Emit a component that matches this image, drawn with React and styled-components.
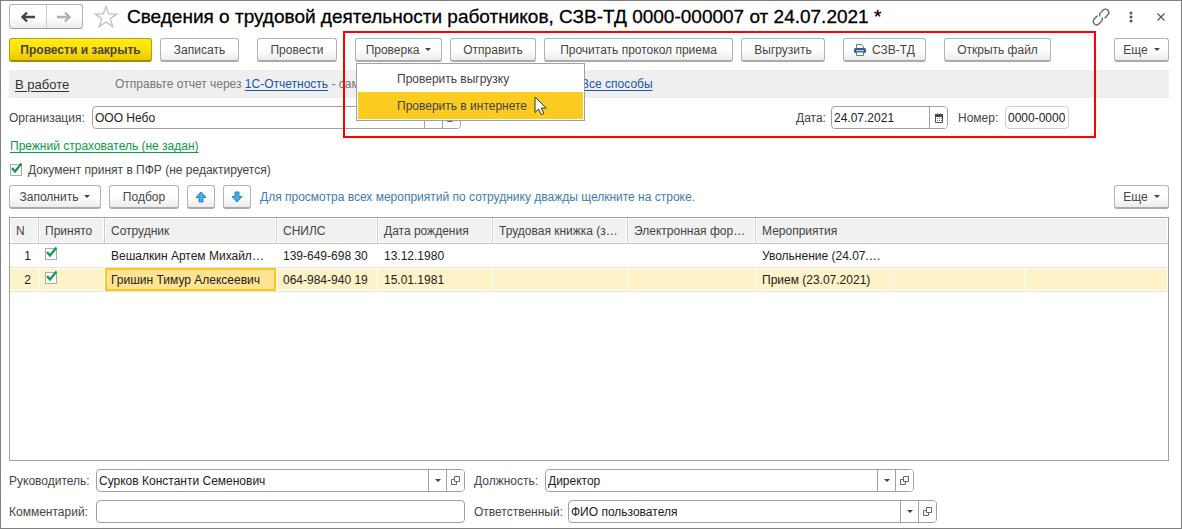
import React, { useState } from "react";
import styled, { createGlobalStyle } from "styled-components";

const GlobalStyle = createGlobalStyle`
  * {
    box-sizing: border-box;
  }
  body {
    margin: 0;
    background: #fff;
  }
  body, button, input, table {
    font-family: "Liberation Sans", Arial, sans-serif;
    font-size: 12px;
    color: #444;
  }
`;

const Window = styled.main`
  position: relative;
  display: flex;
  flex-direction: column;
  min-height: 100vh;
  padding: 3px 12px 5px 8px;
  border: 1px solid #808080;
  background: #fff;
`;

const TitleBar = styled.header`
  display: flex;
  align-items: center;
  height: 25px;
  margin-right: -7px;
`;

const NavGroup = styled.div`
  display: flex;
  width: 74px;
  height: 25px;
  border: 1px solid #b3b3b3;
  border-bottom-color: #999;
  border-radius: 3px;
  background: linear-gradient(#fff 50%, #ececec);
`;

const NavButton = styled.button`
  display: flex;
  flex: 1;
  align-items: center;
  justify-content: center;
  padding: 0;
  border: none;
  background: none;

  & + & {
    border-left: 1px solid #ccc;
  }
`;

const IconButton = styled.button`
  display: flex;
  align-items: center;
  justify-content: center;
  width: 30px;
  height: 24px;
  padding: 0;
  border: none;
  background: none;
`;

const StarButton = styled(IconButton)`
  width: 24px;
  margin: 0 9px 0 11px;
`;

const Title = styled.h1`
  flex: 1;
  margin: 0;
  font-size: 19px;
  font-weight: 400;
  line-height: 24px;
  color: #000;
  white-space: nowrap;
  -webkit-text-stroke: 0.3px #000;
`;

const Toolbar = styled.div`
  display: flex;
  gap: 8px;
  margin-top: ${({ $top }) => $top}px;
`;

const ToolGroup = styled.div`
  display: flex;
  gap: 8px;
  margin-right: ${({ $push }) => ($push ? "auto" : "10px")};
`;

const Button = styled.button`
  display: flex;
  align-items: center;
  justify-content: center;
  gap: 6px;
  width: ${({ $w }) => $w}px;
  height: 24px;
  padding: 0;
  border: 1px solid #b3b3b3;
  border-bottom: 2px solid #aaa;
  border-radius: 3px;
  background: linear-gradient(#fff 50%, #ececec);
  white-space: nowrap;
`;

const PrimaryButton = styled(Button)`
  border-color: #b8a000;
  border-bottom-color: #a08c00;
  background: linear-gradient(#ffec1a, #ffe000 50%, #e8c800);
  font-weight: 700;
`;

const Caret = styled.span`
  border: 3px solid transparent;
  border-top-color: #444;
  border-bottom: none;
`;

const MenuAnchor = styled.div`
  position: relative;
`;

const Menu = styled.ul`
  position: absolute;
  top: 25px;
  left: 1px;
  z-index: 3;
  width: 229px;
  margin: 0;
  padding: 1px;
  border: 1px solid #a0a0a0;
  background: #fff;
  list-style: none;
`;

const MenuItem = styled.button`
  display: block;
  width: 100%;
  height: 27px;
  padding: 0 0 0 39px;
  border: none;
  background: ${({ $active }) => ($active ? "#fbcb20" : "#fff")};
  text-align: left;
`;

const Pointer = styled.svg`
  position: absolute;
  top: 58px;
  left: 179px;
  z-index: 4;
`;

const Banner = styled.div`
  display: flex;
  align-items: center;
  height: 28px;
  margin-top: 8px;
  padding-left: 6px;
  background: #efefef;
  color: #777;
  white-space: nowrap;
`;

const Link = styled.a`
  color: ${({ $color }) => $color || "#1655b0"};
  font-size: ${({ $large }) => ($large ? 13 : 12)}px;
  text-decoration: underline;
  text-underline-offset: 2px;
`;

const StateCell = styled.div`
  width: 100px;
`;

const Note = styled.span`
  width: 253px;
  overflow: hidden;
  white-space: pre;
`;

const FieldRow = styled.div`
  display: flex;
  align-items: center;
  gap: 10px;
  margin-top: 8px;
`;

const FieldGroup = styled.div`
  display: flex;
  gap: 10px;
  margin-left: auto;
  padding-right: 100px;
`;

const Field = styled.div`
  display: flex;
  align-items: center;
  flex: 0 1 auto;
`;

const Label = styled.label`
  width: ${({ $w }) => $w}px;
  flex-shrink: 0;
  white-space: nowrap;
`;

const InputBox = styled.div`
  display: flex;
  width: ${({ $w }) => $w}px;
  height: 23px;
  padding-right: ${({ $pale }) => ($pale ? 3 : 0)}px;
  border: 1px solid ${({ $pale }) => ($pale ? "#d0d0d0" : "#a0a0a0")};
  border-radius: 4px;
  background: #fff;
  overflow: hidden;
`;

const Input = styled.input`
  flex: 1;
  min-width: 0;
  padding: 0 0 0 2px;
  border: none;
  outline: none;
  background: none;
  color: #222;
`;

const InputButton = styled.button`
  display: flex;
  align-items: center;
  justify-content: center;
  width: 18px;
  padding: 0;
  border: none;
  border-left: 1px solid #a0a0a0;
  background: #fff;
`;

const LinkRow = styled.div`
  margin-top: 8px;
  padding-left: 1px;
  line-height: 18px;
`;

const CheckRow = styled.label`
  display: flex;
  align-items: center;
  gap: 6px;
  height: 18px;
  margin-top: 6px;
  padding-left: 1px;
`;

const CheckWrap = styled.span`
  position: relative;
  display: inline-block;
  width: 12px;
  height: 12px;

  input {
    display: block;
    width: 12px;
    height: 12px;
    margin: 0;
    border: 1px solid #aaa;
    background: #fff;
    appearance: none;
  }

  svg {
    position: absolute;
    top: -2px;
    left: 0;
    pointer-events: none;
  }
`;

const Hint = styled.span`
  align-self: center;
  margin-right: auto;
  padding-left: 1px;
  color: #3b7db3;
  white-space: nowrap;
`;

const TablePanel = styled.section`
  flex: 1;
  margin-top: 8px;
  border: 1px solid #a0a0a0;
  overflow: hidden;
`;

const Table = styled.table`
  width: 100%;
  border-collapse: separate;
  border-spacing: 0;
  table-layout: fixed;
`;

const Th = styled.th`
  height: 26px;
  padding: 0 7px 0 6px;
  border-right: 1px solid #ccc;
  border-bottom: 1px solid #c4c4c4;
  background: #f1f1f1;
  box-shadow: inset 0 0 0 1px #fff;
  font-weight: 400;
  text-align: left;
  white-space: nowrap;
  overflow: hidden;
  text-overflow: ellipsis;

  &:last-child {
    border-right: none;
  }
`;

const Td = styled.td`
  height: 24px;
  padding: 0 7px 0 6px;
  border-right: 1px solid #fff;
  border-bottom: 1px solid #e2e2e2;
  background: ${({ $selected }) => ($selected ? "#fdf2c8" : "#fff")};
  box-shadow: ${({ $current }) =>
    $current ? "inset 0 0 0 2px #fbc81e" : "inset 0 -1px #fff, inset 0 1px #fff"};
  color: #222;
  text-align: ${({ $right }) => ($right ? "right" : "left")};
  white-space: nowrap;
  overflow: hidden;
  text-overflow: ellipsis;
  ${({ $current }) => $current && "background: #fee491;"}
`;

const Footer = styled.footer`
  display: grid;
  gap: 8px;
  margin-top: 8px;
`;

const FooterRow = styled.div`
  display: flex;
  gap: 9px;
`;

const Highlight = styled.div`
  position: absolute;
  top: 30px;
  left: 342px;
  z-index: 2;
  width: 753px;
  height: 107px;
  border: 2px solid #f00;
  pointer-events: none;
`;

const columns = [
  { title: "N", width: 29 },
  { title: "Принято", width: 66 },
  { title: "Сотрудник", width: 172 },
  { title: "СНИЛС", width: 101 },
  { title: "Дата рождения", width: 115 },
  { title: "Трудовая книжка (заявление)", width: 135 },
  { title: "Электронная форма (заявление)", width: 128 },
  { title: "Мероприятия", width: 135, span: 3 },
];

const employees = [
  {
    name: "Вешалкин Артем Михайлович",
    snils: "139-649-698 30",
    birth: "13.12.1980",
    event: "Увольнение (24.07.2021)",
  },
  {
    name: "Гришин Тимур Алексеевич",
    snils: "064-984-940 19",
    birth: "15.01.1981",
    event: "Прием (23.07.2021)",
  },
];

function ArrowIcon({ color, flip }) {
  return (
    <svg width="16" height="12" viewBox="0 0 16 12">
      <path
        d="M7 1.5 2.5 6 7 10.5M3 6h12"
        fill="none"
        stroke={color}
        strokeWidth="2.4"
        transform={flip ? "rotate(180 8 6)" : undefined}
      />
    </svg>
  );
}

function MoveIcon({ down }) {
  return (
    <svg width="12" height="12" viewBox="0 0 12 12">
      <path
        d="M6 1 11 6.4H8V11H4V6.4H1Z"
        fill="#3fb0ee"
        stroke="#2a82bd"
        strokeWidth="1"
        strokeLinejoin="round"
        transform={down ? "rotate(180 6 6)" : undefined}
      />
    </svg>
  );
}

function PrinterIcon() {
  return (
    <svg width="12" height="12" viewBox="0 0 12 12">
      <path d="M2.5 4.5v-4h5l2 2v2" fill="#fff" stroke="#5c7f9f" />
      <rect y="4" width="12" height="5" rx="1.5" fill="#2f5f8c" />
      <path d="M2 6.5h8" stroke="#b8cadb" />
      <path d="M2.5 8h7v3.5h-7z" fill="#fff" stroke="#5c7f9f" />
    </svg>
  );
}

function CalendarIcon() {
  return (
    <svg width="10" height="10" viewBox="0 0 10 10">
      <path d="M1.5 2h7v7.5h-7z" fill="#fff" stroke="#555" />
      <path d="M1 1h8v3H1z" fill="#444" />
      <path d="M3.5 0v2M6.5 0v2" stroke="#888" />
      <path d="M3 5.5h5M3 7.5h5" stroke="#777" strokeDasharray="1 1" />
    </svg>
  );
}

function OpenIcon() {
  return (
    <svg width="10" height="10" viewBox="0 0 10 10">
      <path d="M3.5.5h5v5h-5zM3 3.5H.5v5h5V6" fill="none" stroke="#666" />
    </svg>
  );
}

function Check(props) {
  const [checked, setChecked] = useState(true);

  return (
    <CheckWrap>
      <input
        type="checkbox"
        checked={checked}
        onChange={() => setChecked(!checked)}
        {...props}
      />
      {checked && (
        <svg width="13" height="12" viewBox="0 0 13 12">
          <path
            d="M2 6 5 9.5 11.5 1.5"
            fill="none"
            stroke="#0c9a48"
            strokeWidth="2.2"
          />
        </svg>
      )}
    </CheckWrap>
  );
}

function TextField({ id, label, labelWidth, width, value, select, pale, date }) {
  return (
    <Field>
      <Label htmlFor={id} $w={labelWidth}>
        {label}
      </Label>
      <InputBox $w={width} $pale={pale}>
        <Input id={id} defaultValue={value} />
        {select && (
          <>
            <InputButton aria-label="Выбрать">
              <Caret />
            </InputButton>
            <InputButton aria-label="Открыть">
              <OpenIcon />
            </InputButton>
          </>
        )}
        {date && (
          <InputButton aria-label="Календарь">
            <CalendarIcon />
          </InputButton>
        )}
      </InputBox>
    </Field>
  );
}

function App() {
  return (
    <Window>
      <GlobalStyle />
      <TitleBar>
        <NavGroup>
          <NavButton aria-label="Назад">
            <ArrowIcon color="#444" />
          </NavButton>
          <NavButton aria-label="Вперед">
            <ArrowIcon color="#b0b0b0" flip />
          </NavButton>
        </NavGroup>
        <StarButton aria-label="В избранное">
          <svg width="24" height="24" viewBox="0 0 24 24">
            <path
              d="M12 1.5 14.7 9H22.5L16.2 13.7 18.8 21.8 12 17 5.2 21.8 7.8 13.7 1.5 9H9.3Z"
              fill="none"
              stroke="#b4bcc4"
              strokeWidth="1.2"
            />
          </svg>
        </StarButton>
        <Title>
          Сведения о трудовой деятельности работников, СЗВ-ТД 0000-000007 от
          24.07.2021 *
        </Title>
        <IconButton aria-label="Ссылка">
          <svg width="18" height="18" viewBox="0 0 16 16">
            <g
              fill="none"
              stroke="#666"
              strokeWidth="1.2"
              transform="rotate(-45 8 8)"
            >
              <path d="M6.5 5H2.5a3 3 0 0 0 0 6h3a3 3 0 0 0 2.8-2" />
              <path d="M9.5 11h4a3 3 0 0 0 0-6h-3a3 3 0 0 0-2.8 2" />
            </g>
          </svg>
        </IconButton>
        <IconButton aria-label="Меню">
          <svg width="4" height="12" viewBox="0 0 4 12">
            <g fill="#555">
              <circle cx="2" cy="2" r="1.5" />
              <circle cx="2" cy="6" r="1.5" />
              <circle cx="2" cy="10" r="1.5" />
            </g>
          </svg>
        </IconButton>
        <IconButton aria-label="Закрыть">
          <svg width="8" height="8" viewBox="0 0 8 8">
            <path d="m.5.5 7 7m0-7-7 7" stroke="#555" strokeWidth="1.2" />
          </svg>
        </IconButton>
      </TitleBar>

      <Toolbar $top={9}>
        <ToolGroup>
          <PrimaryButton $w={143}>Провести и закрыть</PrimaryButton>
          <Button $w={79}>Записать</Button>
        </ToolGroup>
        <ToolGroup>
          <Button $w={80}>Провести</Button>
        </ToolGroup>
        <ToolGroup>
          <MenuAnchor>
            <Button $w={87} aria-expanded="true">
              Проверка <Caret />
            </Button>
            <Menu>
              <li>
                <MenuItem>Проверить выгрузку</MenuItem>
              </li>
              <li>
                <MenuItem $active>Проверить в интернете</MenuItem>
              </li>
            </Menu>
            <Pointer width="14" height="20" viewBox="0 0 14 20">
              <path
                d="M1 1v15.5l3.6-3.4 2.6 5.6 2.6-1.2-2.5-5.4h5Z"
                fill="#fff"
                stroke="#333"
              />
            </Pointer>
          </MenuAnchor>
          <Button $w={86}>Отправить</Button>
          <Button $w={189}>Прочитать протокол приема</Button>
          <Button $w={84}>Выгрузить</Button>
        </ToolGroup>
        <ToolGroup>
          <Button $w={83}>
            <PrinterIcon /> СЗВ-ТД
          </Button>
        </ToolGroup>
        <ToolGroup $push>
          <Button $w={107}>Открыть файл</Button>
        </ToolGroup>
        <Button $w={55}>
          Еще <Caret />
        </Button>
      </Toolbar>

      <Banner>
        <StateCell>
          <Link href="#state" $color="#333" $large>
            В работе
          </Link>
        </StateCell>
        <span>Отправьте отчет через&nbsp;</span>
        <Link href="#report">1С-Отчетность</Link>
        <Note> - самый быстрый и удобный способ. </Note>
        <Link href="#all">Все способы</Link>
      </Banner>

      <FieldRow>
        <TextField
          id="org"
          label="Организация:"
          labelWidth={83}
          width={369}
          value="ООО Небо"
          select
        />
        <FieldGroup>
          <TextField
            id="date"
            label="Дата:"
            labelWidth={35}
            width={117}
            value="24.07.2021"
            date
          />
          <TextField
            id="number"
            label="Номер:"
            labelWidth={47}
            width={64}
            value="0000-000007"
            pale
          />
        </FieldGroup>
      </FieldRow>

      <LinkRow>
        <Link href="#previous" $color="#0c9a48">
          Прежний страхователь (не задан)
        </Link>
      </LinkRow>
      <CheckRow>
        <Check />
        Документ принят в ПФР (не редактируется)
      </CheckRow>

      <Toolbar $top={6}>
        <Button $w={92}>
          Заполнить <Caret />
        </Button>
        <Button $w={70}>Подбор</Button>
        <Button $w={28} aria-label="Вверх">
          <MoveIcon />
        </Button>
        <Button $w={28} aria-label="Вниз">
          <MoveIcon down />
        </Button>
        <Hint>
          Для просмотра всех мероприятий по сотруднику дважды щелкните на строке.
        </Hint>
        <Button $w={55}>
          Еще <Caret />
        </Button>
      </Toolbar>

      <TablePanel>
        <Table>
          <colgroup>
            {columns.map((c) => (
              <col key={c.title} width={c.width} />
            ))}
            <col width="135" />
            <col />
          </colgroup>
          <thead>
            <tr>
              {columns.map((c) => (
                <Th key={c.title} colSpan={c.span}>
                  {c.title}
                </Th>
              ))}
            </tr>
          </thead>
          <tbody>
            {employees.map((e, i) => {
              const selected = i === 1;
              return (
                <tr key={e.snils}>
                  <Td $selected={selected} $right>
                    {i + 1}
                  </Td>
                  <Td $selected={selected}>
                    <Check aria-label="Принято" />
                  </Td>
                  <Td $selected={selected} $current={selected}>
                    {e.name}
                  </Td>
                  <Td $selected={selected}>{e.snils}</Td>
                  <Td $selected={selected}>{e.birth}</Td>
                  <Td $selected={selected} />
                  <Td $selected={selected} />
                  <Td $selected={selected}>{e.event}</Td>
                  <Td $selected={selected} />
                  <Td $selected={selected} />
                </tr>
              );
            })}
          </tbody>
        </Table>
      </TablePanel>

      <Footer>
        <FooterRow>
          <TextField
            id="head"
            label="Руководитель:"
            labelWidth={87}
            width={369}
            value="Сурков Константи Семенович"
            select
          />
          <TextField
            id="position"
            label="Должность:"
            labelWidth={71}
            width={369}
            value="Директор"
            select
          />
        </FooterRow>
        <FooterRow>
          <TextField
            id="comment"
            label="Комментарий:"
            labelWidth={87}
            width={369}
            value=""
          />
          <TextField
            id="responsible"
            label="Ответственный:"
            labelWidth={94}
            width={369}
            value="ФИО пользователя"
            select
          />
        </FooterRow>
      </Footer>

      <Highlight />
    </Window>
  );
}

export default App;
